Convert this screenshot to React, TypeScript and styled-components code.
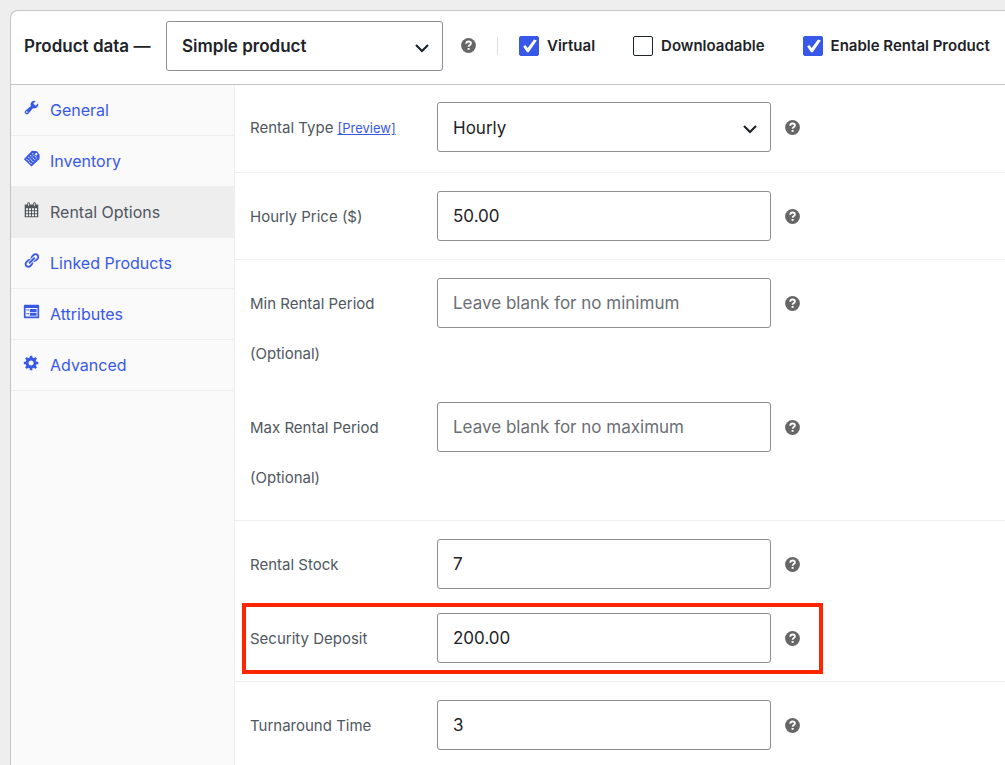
import React from 'react';
import styled, { createGlobalStyle, css } from 'styled-components';

const GlobalStyle = createGlobalStyle`
  *, *::before, *::after { box-sizing: border-box; }
  html, body, #root { min-height: 100%; }
  body {
    margin: 0;
    background: #eeeeee;
    color: #1d2327;
    font-family: Inter, "Liberation Sans", sans-serif;
    font-size: 16px;
    overflow-x: hidden;
  }
`;

const Page = styled.div`
  padding: 10px 0 0 10px;
  min-height: 100vh;
  display: flex;
`;

const Panel = styled.section`
  flex: 1;
  min-width: 0;
  display: flex;
  flex-direction: column;
  background: #fff;
  border: 1px solid #c3c4c7;
  border-width: 1px 0 0 1px;
  border-radius: 8px 0 0 0;
  overflow: hidden;
`;

const Header = styled.header`
  display: flex;
  align-items: center;
  padding: 10px 0 13px 13px;
  border-bottom: 1px solid #c3c4c7;
  font-weight: 600;
  white-space: nowrap;
`;

const Title = styled.label`
  width: 142px;
  flex: none;
  font-size: 17px;
`;

const controlBox = css`
  width: 100%;
  height: 50px;
  padding: 0 15px;
  border: 1px solid #8c8f94;
  border-radius: 3px;
  background: #fff;
  color: #1d2327;
  font: inherit;
  font-size: 17px;
  &:focus { outline: 2px solid #3858e9; outline-offset: -1px; }
`;

const SelectWrap = styled.div<{ $width: number }>`
  position: relative;
  flex: none;
  width: ${(p) => p.$width}px;
`;

const Select = styled.select`
  ${controlBox}
  appearance: none;
`;

const Chevron = styled.svg`
  position: absolute;
  right: 13px;
  top: 19px;
  width: 16px;
  height: 16px;
  pointer-events: none;
`;

const Input = styled.input`
  ${controlBox}
  flex: none;
  width: 334px;
  &::placeholder { color: #6b6f74; opacity: 1; }
`;

const HelpButton = styled.button`
  flex: none;
  width: 15px;
  height: 15px;
  padding: 0;
  border: 0;
  background: none;
  color: #666;
  cursor: help;
  svg { display: block; width: 15px; height: 15px; }
`;

const HeaderHelp = styled.div`
  display: flex;
  margin: 0 21px 2px 18px;
`;

const Options = styled.div`
  display: flex;
  align-items: center;
  gap: 38px;
`;

const Divider = styled.span`
  width: 1px;
  height: 18px;
  margin-right: 21px;
  background: #dcdcde;
`;

const Option = styled.label`
  display: flex;
  align-items: center;
  gap: 8px;
  font-size: 15px;
  line-height: 18px;
`;

const CheckWrap = styled.span`
  position: relative;
  display: flex;
  width: 20px;
  height: 20px;
  svg { position: absolute; inset: 0; pointer-events: none; }
`;

const Checkbox = styled.input`
  appearance: none;
  width: 20px;
  height: 20px;
  margin: 0;
  border: 1px solid #1d2327;
  border-radius: 2px;
  background: #fff;
  &:checked { background: #3858e9; border-color: #3858e9; }
`;

const Body = styled.div`
  flex: 1;
  display: flex;
`;

const Sidebar = styled.nav`
  flex: none;
  width: 224px;
  background: #fafafa;
  border-right: 1px solid #eeeeee;
`;

const TabLink = styled.a<{ $active?: boolean }>`
  display: flex;
  align-items: center;
  gap: 10px;
  height: 51px;
  padding: 0 12px;
  border-bottom: 1px solid #eeeeee;
  background: ${(p) => (p.$active ? '#eeeeee' : 'transparent')};
  color: ${(p) => (p.$active ? '#50575e' : '#3858e9')};
  font-size: 16px;
  text-decoration: none;
  svg { width: 17px; height: 17px; margin-bottom: 5px; fill: currentColor; overflow: visible; }
`;

const Content = styled.form`
  flex: 1;
  min-width: 0;
`;

const Group = styled.div`
  display: flex;
  flex-direction: column;
  align-items: flex-start;
  gap: 24px;
  padding: 18px 0 18px 15px;
  border-bottom: 1px solid #eeeeee;
  &:first-child { padding-top: 17px; padding-bottom: 19px; }
  &:last-child { border-bottom: 0; }
`;

const Row = styled.div`
  position: relative;
  display: flex;
  align-items: flex-start;
  color: #50575e;
  line-height: 50px;
  ${HelpButton} { margin: 18px 0 0 14px; }
`;

const Caption = styled.div`
  flex: none;
  width: 187px;
  padding-top: 1px;
  margin-bottom: -1px;
  font-size: 15px;
`;

const FieldLabel = styled.label`
  display: inline-block;
  max-width: 140px;
`;

const PreviewLink = styled.a`
  margin-left: 4px;
  color: #3858e9;
  font-size: 13px;
`;

const Highlight = styled.div`
  position: absolute;
  inset: -10px -23px -11px -8px;
  border: 4px solid #ff2600;
  pointer-events: none;
`;

const icons: Record<string, React.ReactNode> = {
  wrench: (
    <path d="M16.68 9.77c-1.34 1.34-3.3 1.67-4.95.99l-5.41 6.52c-.99.99-2.59.99-3.58 0s-.99-2.59 0-3.57l6.52-5.42c-.68-1.65-.35-3.61.99-4.95 1.28-1.28 3.12-1.62 4.72-1.06l-2.89 2.89 2.82 2.82 2.86-2.87c.53 1.58.18 3.39-1.08 4.65zM3.81 16.21c.4.39 1.04.39 1.43 0 .4-.4.4-1.04 0-1.43-.39-.4-1.03-.4-1.43 0-.39.39-.39 1.03 0 1.43z" />
  ),
  tag: (
    <>
      <path
        fillRule="evenodd"
        d="M10.500 1L16.500 1.500L19.500 5.500V10.500L10 19.500L1 10.800ZM15.500 3.600a1.400 1.400 0 1 0 .1 2.800a1.400 1.400 0 0 0-.1-2.800Z"
      />
      <path
        d="M10.800 4L17 10.200M8.600 6.200L14.800 12.400M6.400 8.400L12.600 14.600M4.200 10.600L10.400 16.800"
        fill="none"
        stroke="#fafafa"
        strokeWidth="1.2"
        strokeDasharray="1.300 1"
      />
    </>
  ),
  calendar: (
    <path
      fillRule="evenodd"
      d="M15 4h3v15H2V4h3V3a1.5 1.5 0 0 1 3 0v1h4V3a1.5 1.5 0 0 1 3 0v1zM6 3v2.5a.5.5 0 0 0 1 0V3a.5.5 0 0 0-1 0zm7 0v2.5a.5.5 0 0 0 1 0V3a.5.5 0 0 0-1 0zM3.500 8.500h2.400v2.500h-2.400zM7 8.500h2.400v2.500h-2.400zM10.600 8.500h2.400v2.500h-2.400zM14.100 8.500h2.400v2.500h-2.400zM3.500 12h2.400v2.500h-2.400zM7 12h2.400v2.500h-2.400zM10.600 12h2.400v2.500h-2.400zM14.100 12h2.400v2.500h-2.400zM3.500 15.500h2.400v2.500h-2.400zM7 15.500h2.400v2.500h-2.400zM10.600 15.500h2.400v2.500h-2.400zM14.100 15.500h2.400v2.500h-2.400z"
    />
  ),
  link: (
    <path d="M17.74 2.76c1.68 1.69 1.68 4.41 0 6.1l-1.53 1.52c-1.12 1.12-2.7 1.47-4.14 1.09l2.62-2.61.76-.77.76-.76c.84-.84.84-2.2 0-3.04-.84-.85-2.2-.85-3.04 0l-.77.76-3.38 3.38c-.37-1.44-.02-3.02 1.1-4.14l1.52-1.53c1.69-1.68 4.42-1.68 6.1 0zM8.59 13.43l5.34-5.34c.42-.42.42-1.1 0-1.52-.44-.43-1.13-.39-1.53 0l-5.33 5.34c-.42.42-.42 1.1 0 1.52.44.43 1.13.39 1.52 0zm-.76 2.29l4.14-4.15c.38 1.44.03 3.02-1.09 4.14l-1.52 1.53c-1.69 1.68-4.41 1.68-6.1 0-1.68-1.68-1.68-4.42 0-6.1l1.53-1.52c1.12-1.12 2.7-1.47 4.14-1.1l-4.14 4.15c-.85.84-.85 2.2 0 3.05.84.84 2.2.84 3.04 0z" />
  ),
  form: (
    <path
      fillRule="evenodd"
      d="M2 2h16c.55 0 1 .45 1 1v14c0 .55-.45 1-1 1H2c-.55 0-1-.45-1-1V3c0-.55.45-1 1-1zm15 14V6H3v10h14zM4 7.500v1.200h3V7.500H4zm4-.5v3.500h8V7H8zm-4 5v1.200h3V12H4zm4-.5V15h8v-3.500H8z"
    />
  ),
  gear: (
    <path d="M18 12h-2.18c-.17.7-.44 1.35-.81 1.93l1.54 1.54-2.1 2.1-1.54-1.54c-.58.36-1.23.63-1.91.79V19H8v-2.18c-.68-.16-1.33-.43-1.91-.79l-1.54 1.54-2.12-2.12 1.54-1.54c-.36-.58-.63-1.23-.79-1.91H1V9.03h2.17c.16-.7.44-1.35.8-1.94L2.43 5.55l2.1-2.1 1.54 1.54c.58-.37 1.24-.64 1.93-.81V2h3v2.18c.68.16 1.33.43 1.91.79l1.54-1.54 2.12 2.12-1.54 1.54c.36.59.64 1.24.8 1.94H18V12zm-8.500 1.500c1.660 0 3-1.340 3-3s-1.340-3-3-3-3 1.340-3 3 1.340 3 3 3z" />
  ),
};

const tabs = [
  { name: 'General', icon: 'wrench' },
  { name: 'Inventory', icon: 'tag' },
  { name: 'Rental Options', icon: 'calendar', active: true },
  { name: 'Linked Products', icon: 'link' },
  { name: 'Attributes', icon: 'form' },
  { name: 'Advanced', icon: 'gear' },
];

function Help() {
  return (
    <HelpButton type="button" aria-label="Help">
      <svg viewBox="0 0 15 15" aria-hidden="true">
        <circle cx="7.5" cy="7.5" r="7.4" fill="currentColor" />
        <path
          d="M5.200 5.700C5.300 4.200 6.200 3.500 7.600 3.500C9 3.500 9.900 4.300 9.900 5.400C9.900 7 7.600 7 7.600 8.800"
          fill="none"
          stroke="#fff"
          strokeWidth="1.8"
        />
        <rect x="6.600" y="10" width="2" height="1.800" fill="#fff" />
      </svg>
    </HelpButton>
  );
}

function Dropdown({ id, value, width }: { id: string; value: string; width: number }) {
  return (
    <SelectWrap $width={width}>
      <Select id={id} defaultValue={value}>
        <option>{value}</option>
      </Select>
      <Chevron viewBox="0 0 16 16" aria-hidden="true">
        <path d="M2 5L8 11L14 5" fill="none" stroke="#1d2327" strokeWidth="2.2" />
      </Chevron>
    </SelectWrap>
  );
}

function CheckOption({ label, checked = false }: { label: string; checked?: boolean }) {
  return (
    <Option>
      <CheckWrap>
        <Checkbox type="checkbox" defaultChecked={checked} />
        <svg viewBox="0 0 20 20" aria-hidden="true">
          <path d="M4.200 10.500L6.300 9L8.700 12L15 3.600L17.800 4.400L9.700 16.200H8Z" fill="#fff" />
        </svg>
      </CheckWrap>
      {label}
    </Option>
  );
}

interface FieldProps {
  id: string;
  label: string;
  value?: string;
  placeholder?: string;
  highlighted?: boolean;
}

function Field({ id, label, value, placeholder, highlighted }: FieldProps) {
  return (
    <Row>
      <Caption>
        <FieldLabel htmlFor={id}>{label}</FieldLabel>
      </Caption>
      <Input id={id} type="text" defaultValue={value} placeholder={placeholder} />
      <Help />
      {highlighted && <Highlight />}
    </Row>
  );
}

export default function App() {
  return (
    <>
      <GlobalStyle />
      <Page>
        <Panel>
          <Header>
            <Title htmlFor="product-type">Product data —</Title>
            <Dropdown id="product-type" value="Simple product" width={277} />
            <HeaderHelp>
              <Help />
            </HeaderHelp>
            <Divider />
            <Options>
              <CheckOption label="Virtual" checked />
              <CheckOption label="Downloadable" />
              <CheckOption label="Enable Rental Product" checked />
            </Options>
          </Header>
          <Body>
            <Sidebar>
              {tabs.map((tab) => (
                <TabLink key={tab.name} href="#" $active={tab.active}>
                  <svg viewBox="0 0 20 20" aria-hidden="true">
                    {icons[tab.icon]}
                  </svg>
                  {tab.name}
                </TabLink>
              ))}
            </Sidebar>
            <Content>
              <Group>
                <Row>
                  <Caption>
                    <FieldLabel htmlFor="rental-type">Rental Type</FieldLabel>
                    <PreviewLink href="#">[Preview]</PreviewLink>
                  </Caption>
                  <Dropdown id="rental-type" value="Hourly" width={334} />
                  <Help />
                </Row>
              </Group>
              <Group>
                <Field id="hourly-price" label="Hourly Price ($)" value="50.00" />
              </Group>
              <Group>
                <Field
                  id="min-period"
                  label="Min Rental Period (Optional)"
                  placeholder="Leave blank for no minimum"
                />
                <Field
                  id="max-period"
                  label="Max Rental Period (Optional)"
                  placeholder="Leave blank for no maximum"
                />
              </Group>
              <Group>
                <Field id="rental-stock" label="Rental Stock" value="7" />
                <Field id="security-deposit" label="Security Deposit" value="200.00" highlighted />
              </Group>
              <Group>
                <Field id="turnaround-time" label="Turnaround Time" value="3" />
              </Group>
            </Content>
          </Body>
        </Panel>
      </Page>
    </>
  );
}
